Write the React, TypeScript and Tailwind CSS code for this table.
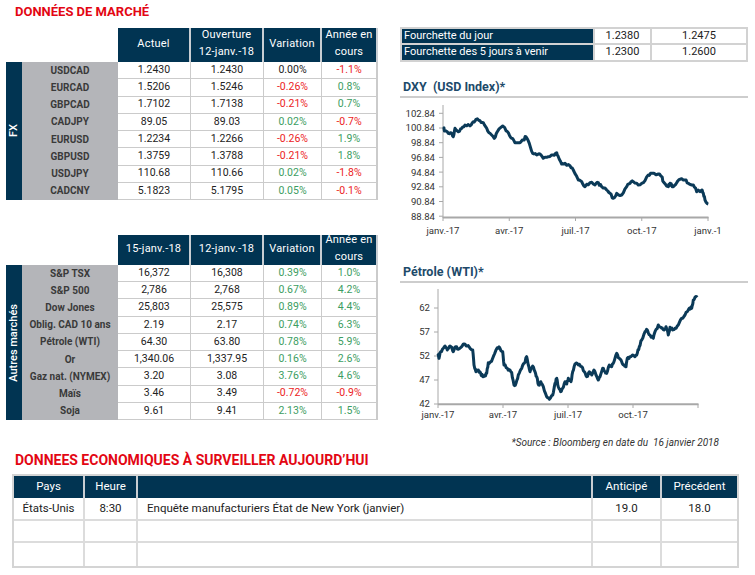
import React from "react";

type P = [number, number];

function rng(seed: number) {
  let s = seed;
  return () => {
    s = (s * 16807) % 2147483647;
    return (s - 1) / 2147483646;
  };
}

function buildPath(pts: P[], ox: number, oy: number, seed: number) {
  const r = rng(seed);
  const out: P[] = [];
  for (let i = 0; i < pts.length; i++) {
    const x = ox + pts[i][0] / 3;
    const y = oy + pts[i][1] / 3;
    if (i > 0) {
      const px = ox + pts[i - 1][0] / 3;
      const py = oy + pts[i - 1][1] / 3;
      const n = 2;
      for (let k = 1; k <= n; k++) {
        const t = k / (n + 1);
        out.push([px + (x - px) * t, py + (y - py) * t + (r() - 0.5) * 2.6]);
      }
    }
    out.push([x, y]);
  }
  return "M" + out.map((p) => p[0].toFixed(1) + "," + p[1].toFixed(1)).join(" L");
}

const DXY_PTS: P[] = [
  [160, 385], [165, 392], [175, 400], [183, 398], [190, 410], [195, 385], [205, 395], [215, 385],
  [225, 375], [240, 378], [250, 365], [258, 358], [270, 362], [280, 368], [290, 385], [300, 400],
  [313, 415], [322, 395], [338, 378], [345, 385], [355, 398], [365, 415], [375, 428], [390, 428],
  [400, 420], [408, 410], [418, 430], [428, 460], [440, 465], [450, 462], [460, 475], [475, 470],
  [490, 465], [500, 458], [505, 470], [515, 492], [525, 490], [540, 497], [550, 510], [565, 540],
  [575, 545], [585, 560], [600, 548], [615, 555], [625, 548], [635, 560], [650, 570], [660, 580],
  [670, 595], [680, 580], [695, 585], [710, 560], [720, 550], [730, 545], [745, 555], [760, 548],
  [775, 525], [785, 520], [805, 522], [815, 530], [820, 545], [835, 560], [840, 550], [850, 560],
  [860, 548], [870, 538], [885, 540], [895, 550], [910, 555], [920, 575], [935, 570], [940, 580],
  [945, 600], [955, 612],
];

const WTI_PTS: P[] = [
  [143, 340], [147, 355], [152, 335], [160, 325], [165, 318], [172, 330], [178, 320], [185, 322],
  [190, 335], [197, 320], [205, 328], [215, 320], [222, 312], [232, 318], [240, 325], [248, 330],
  [252, 375], [258, 395], [265, 390], [272, 400], [278, 410], [285, 405], [290, 400], [295, 368],
  [302, 365], [310, 350], [322, 323], [330, 325], [338, 335], [342, 375], [352, 385], [360, 390],
  [365, 398], [372, 435], [378, 430], [385, 405], [395, 385], [403, 370], [410, 350], [415, 375],
  [420, 395], [428, 378], [435, 395], [440, 410], [446, 435], [452, 425], [460, 440], [470, 470],
  [478, 478], [488, 465], [495, 430], [500, 415], [505, 440], [512, 455], [518, 445], [525, 425],
  [530, 432], [535, 415], [543, 425], [548, 395], [555, 372], [565, 375], [575, 380], [583, 395],
  [590, 410], [598, 395], [605, 405], [612, 390], [618, 405], [625, 420], [630, 410], [638, 385],
  [645, 395], [650, 400], [658, 375], [665, 380], [672, 365], [680, 340], [688, 355], [695, 365],
  [702, 375], [708, 380], [712, 355], [720, 350], [728, 345], [735, 350], [742, 340], [748, 320],
  [755, 300], [765, 275], [772, 270], [780, 285], [790, 295], [795, 275], [805, 255], [815, 265],
  [822, 270], [828, 260], [835, 285], [840, 262], [848, 270], [855, 265], [865, 255], [875, 235],
  [885, 225], [895, 210], [898, 205], [905, 205], [910, 180], [915, 172], [922, 172],
];

type C = "k" | "r" | "g";
type Row = [string, string, string, string, C, string, C];

const FX: Row[] = [
  ["USDCAD", "1.2430", "1.2430", "0.00%", "k", "-1.1%", "r"],
  ["EURCAD", "1.5206", "1.5246", "-0.26%", "r", "0.8%", "g"],
  ["GBPCAD", "1.7102", "1.7138", "-0.21%", "r", "0.7%", "g"],
  ["CADJPY", "89.05", "89.03", "0.02%", "g", "-0.7%", "r"],
  ["EURUSD", "1.2234", "1.2266", "-0.26%", "r", "1.9%", "g"],
  ["GBPUSD", "1.3759", "1.3788", "-0.21%", "r", "1.8%", "g"],
  ["USDJPY", "110.68", "110.66", "0.02%", "g", "-1.8%", "r"],
  ["CADCNY", "5.1823", "5.1795", "0.05%", "g", "-0.1%", "r"],
];

const OTHER: Row[] = [
  ["S&P TSX", "16,372", "16,308", "0.39%", "g", "1.0%", "g"],
  ["S&P 500", "2,786", "2,768", "0.67%", "g", "4.2%", "g"],
  ["Dow Jones", "25,803", "25,575", "0.89%", "g", "4.4%", "g"],
  ["Oblig. CAD 10 ans", "2.19", "2.17", "0.74%", "g", "6.3%", "g"],
  ["Pétrole (WTI)", "64.30", "63.80", "0.78%", "g", "5.9%", "g"],
  ["Or", "1,340.06", "1,337.95", "0.16%", "g", "2.6%", "g"],
  ["Gaz nat. (NYMEX)", "3.20", "3.08", "3.76%", "g", "4.6%", "g"],
  ["Maïs", "3.46", "3.49", "-0.72%", "r", "-0.9%", "r"],
  ["Soja", "9.61", "9.41", "2.13%", "g", "1.5%", "g"],
];

function colorClass(c: C) {
  if (c === "r") return "text-[#ec1c24]";
  if (c === "g") return "text-[#3c9d62]";
  return "text-[#222]";
}

function HeaderCell({ w, children }: { w: string; children: React.ReactNode }) {
  return (
    <div className={`${w} flex items-center justify-center text-center leading-[17px] pb-[4px] border-r-2 border-[#c9ced3]`}>
      {children}
    </div>
  );
}

function MarketTable({
  rows,
  side,
  headerH,
  rowH,
  h1,
  h2,
}: {
  rows: Row[];
  side: string;
  headerH: string;
  rowH: string;
  h1: React.ReactNode;
  h2: React.ReactNode;
}) {
  return (
    <div className="w-[372px]">
      <div className={`flex ${headerH}`}>
        <div className="w-[112px]" />
        <div className="flex bg-[#013452] text-white text-[11px] tracking-[0.2px]">
          <HeaderCell w="w-[73px]">{h1}</HeaderCell>
          <HeaderCell w="w-[73px]">{h2}</HeaderCell>
          <HeaderCell w="w-[58px]">Variation</HeaderCell>
          <HeaderCell w="w-[56px]">
            <span>
              Année en
              <br />
              cours
            </span>
          </HeaderCell>
        </div>
      </div>
      <div className="flex">
        <div className="w-[16px] bg-[#013452] flex items-center justify-center">
          <span className="[writing-mode:vertical-rl] rotate-180 text-white text-[11px] font-medium whitespace-nowrap">
            {side}
          </span>
        </div>
        <div className="flex flex-col">
          {rows.map((r, i) => (
            <div key={i} className={`flex ${rowH} text-[10.5px] leading-none`}>
              <div className="w-[96px] bg-[#b4b5b9] flex items-center justify-center font-bold text-[#3a3a3a] text-[10px] whitespace-nowrap">
                {r[0]}
              </div>
              <div className="w-[73px] bg-white border-r border-b border-[#cbcbcb] flex items-center justify-center text-[#222]">
                {r[1]}
              </div>
              <div className="w-[73px] bg-white border-r border-b border-[#cbcbcb] flex items-center justify-center text-[#222]">
                {r[2]}
              </div>
              <div
                className={`w-[58px] bg-white border-r border-b border-[#cbcbcb] flex items-center justify-center ${colorClass(
                  r[4]
                )}`}
              >
                {r[3]}
              </div>
              <div
                className={`w-[56px] bg-white border-r-2 border-b border-[#cbcbcb] flex items-center justify-center ${colorClass(
                  r[6]
                )}`}
              >
                {r[5]}
              </div>
            </div>
          ))}
        </div>
      </div>
    </div>
  );
}

function DxyChart() {
  const labels = ["102.84", "100.84", "98.84", "96.84", "94.84", "92.84", "90.84", "88.84"];
  const xt = [443, 509.25, 575.5, 641.75, 708];
  const xl = ["janv.-17", "avr.-17", "juil.-17", "oct.-17", "janv.-1"];
  return (
    <svg width="348" height="142" viewBox="400 98 348 142" className="block">
      <line x1="443" y1="105" x2="443" y2="218" stroke="#a8a8a8" strokeWidth="1" />
      {labels.map((l, i) => {
        const y = 113.3 + i * 14.7;
        return (
          <g key={l}>
            <line x1="439" y1={y} x2="443" y2={y} stroke="#a8a8a8" strokeWidth="1" />
            <text x="435" y={y + 3.4} textAnchor="end" fontSize="9.6" fill="#333" fontFamily="Roboto, Arial, sans-serif">
              {l}
            </text>
          </g>
        );
      })}
      <line x1="443" y1="217.6" x2="708.5" y2="217.6" stroke="#a8a8a8" strokeWidth="2" />
      {xt.map((x, i) => (
        <g key={i}>
          <line x1={x} y1="217" x2={x} y2="221" stroke="#a8a8a8" strokeWidth="1" />
          <text x={x} y="234" textAnchor="middle" fontSize="9.6" fill="#333" fontFamily="Roboto, Arial, sans-serif">
            {xl[i]}
          </text>
        </g>
      ))}
      <path d={buildPath(DXY_PTS, 390, 0, 7)} fill="none" stroke="#0b3a58" strokeWidth="3" strokeLinejoin="round" />
    </svg>
  );
}

function WtiChart() {
  const labels = ["62", "57", "52", "47", "42"];
  const xt = [438, 503, 568, 633, 698];
  const xl = ["janv.-17", "avr.-17", "juil.-17", "oct.-17", ""];
  return (
    <svg width="348" height="147" viewBox="400 283 348 147" className="block">
      <line x1="438" y1="289" x2="438" y2="404" stroke="#a8a8a8" strokeWidth="1" />
      {labels.map((l, i) => {
        const y = 308 + i * 24;
        return (
          <g key={l}>
            <line x1="434" y1={y} x2="438" y2={y} stroke="#a8a8a8" strokeWidth="1" />
            <text x="430" y={y + 3.4} textAnchor="end" fontSize="9.6" fill="#333" fontFamily="Roboto, Arial, sans-serif">
              {l}
            </text>
          </g>
        );
      })}
      <line x1="438" y1="404.3" x2="698.5" y2="404.3" stroke="#a8a8a8" strokeWidth="2" />
      {xt.map((x, i) => (
        <g key={i}>
          <line x1={x} y1="404" x2={x} y2="408" stroke="#a8a8a8" strokeWidth="1" />
          {xl[i] && (
            <text x={x} y="418" textAnchor="middle" fontSize="9.6" fill="#333" fontFamily="Roboto, Arial, sans-serif">
              {xl[i]}
            </text>
          )}
        </g>
      ))}
      <path d={buildPath(WTI_PTS, 390, 240, 11)} fill="none" stroke="#0b3a58" strokeWidth="3" strokeLinejoin="round" />
    </svg>
  );
}

export default function App() {
  return (
    <div className="w-[755px] h-[575px] bg-white overflow-hidden font-[Roboto,Arial,sans-serif] text-[#222]">
      <div className="flex h-[448px]">
        {/* left */}
        <div className="w-[372px] ml-[6px]">
          <div className="h-[28px] pl-[9px] pt-[5px] text-[13px] leading-[13px] font-bold text-[#e30613]">
            DONNÉES DE MARCHÉ
          </div>
          <MarketTable
            rows={FX}
            side="FX"
            headerH="h-[34px]"
            rowH="h-[17.25px]"
            h1="Actuel"
            h2={
              <span>
                Ouverture
                <br />
                12-janv.-18
              </span>
            }
          />
          <div className="h-[35px]" />
          <MarketTable rows={OTHER} side="Autres marchés" headerH="h-[30px]" rowH="h-[17.22px]" h1="15-janv.-18" h2="12-janv.-18" />
        </div>
        {/* right */}
        <div className="w-[348px] ml-[22px] pt-[27px]">
          <div className="border-2 border-[#d2d2d2] text-[11px]">
            <div className="flex h-[16px] border-b-2 border-[#d2d2d2]">
              <div className="w-[191px] bg-[#013452] text-white pl-[2px] flex items-center">Fourchette du jour</div>
              <div className="w-[57px] border-l-2 border-[#d2d2d2] flex items-center justify-center">1.2380</div>
              <div className="flex-1 border-l-2 border-[#d2d2d2] flex items-center justify-center">1.2475</div>
            </div>
            <div className="flex h-[15px]">
              <div className="w-[191px] bg-[#013452] text-white pl-[2px] flex items-center">
                Fourchette des 5 jours à venir
              </div>
              <div className="w-[57px] border-l-2 border-[#d2d2d2] flex items-center justify-center">1.2300</div>
              <div className="flex-1 border-l-2 border-[#d2d2d2] flex items-center justify-center">1.2600</div>
            </div>
          </div>
          <div className="h-[36px] border-b-2 border-[#cdcdcd] pt-[18px] pl-[3px] text-[12.5px] leading-[13px] font-bold text-[#1d4a6a]">
            DXY&nbsp; (USD Index)*
          </div>
          <DxyChart />
          <div className="h-[43px] border-b-2 border-[#cdcdcd] pt-[25px] pl-[3px] text-[12.5px] leading-[13px] font-bold text-[#1d4a6a]">
            Pétrole (WTI)*
          </div>
          <WtiChart />
          <div className="pt-[8px] pr-[29px] text-right text-[10px] leading-[10px] italic text-[#333]">
            *Source : Bloomberg en date du&nbsp; 16 janvier 2018
          </div>
        </div>
      </div>
      {/* bottom */}
      <div className="h-[26px] pl-[15px] pt-[5px] text-[14px] leading-[14px] font-bold text-[#e30613]">
        DONNEES ECONOMIQUES À SURVEILLER AUJOURD’HUI
      </div>
      <div className="ml-[12px] w-[727px] border-2 border-[#d4d4d4] text-[11.5px]">
        <div className="flex h-[22px] bg-[#013452] text-white">
          <div className="w-[71px] border-r-2 border-[#c9ced3] flex items-center justify-center">Pays</div>
          <div className="w-[53px] border-r-2 border-[#c9ced3] flex items-center justify-center">Heure</div>
          <div className="w-[455px] border-r-2 border-[#c9ced3]" />
          <div className="w-[69px] border-r-2 border-[#c9ced3] flex items-center justify-center">Anticipé</div>
          <div className="flex-1 flex items-center justify-center">Précédent</div>
        </div>
        {[0, 1, 2].map((i) => (
          <div key={i} className={`flex h-[22.7px] ${i < 2 ? "border-b-2 border-[#dcdcdc]" : ""}`}>
            <div className="w-[71px] border-r-2 border-[#dcdcdc] flex items-center justify-center">
              {i === 0 ? "États-Unis" : ""}
            </div>
            <div className="w-[53px] border-r-2 border-[#dcdcdc] flex items-center justify-center">{i === 0 ? "8:30" : ""}</div>
            <div className="w-[455px] border-r-2 border-[#dcdcdc] flex items-center pl-[9px]">
              {i === 0 ? "Enquête manufacturiers État de New York (janvier)" : ""}
            </div>
            <div className="w-[69px] border-r-2 border-[#dcdcdc] flex items-center justify-center">{i === 0 ? "19.0" : ""}</div>
            <div className="flex-1 flex items-center justify-center">{i === 0 ? "18.0" : ""}</div>
          </div>
        ))}
      </div>
    </div>
  );
}
